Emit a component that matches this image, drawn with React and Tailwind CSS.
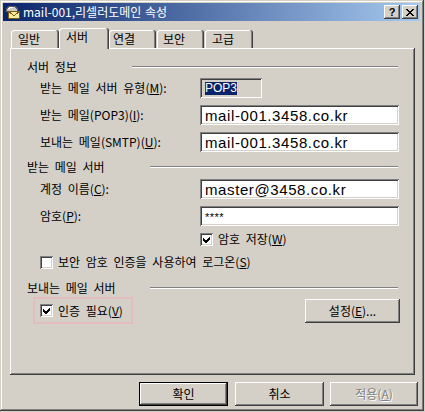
import React from 'react';

const raised = 'shadow-[inset_-1px_-1px_0_#404040,inset_1px_1px_0_#ffffff,inset_-2px_-2px_0_#808080]';
const sunken = 'shadow-[inset_1px_1px_0_#808080,inset_-1px_-1px_0_#ffffff,inset_2px_2px_0_#404040,inset_-2px_-2px_0_#d4d0c8]';

const MailIcon = () => (
  <svg width="16" height="16" viewBox="0 0 16 16" shapeRendering="crispEdges">
    <path d="M1 7 Q2 2 7 2 Q12 2 13 7 Z" fill="#c8c8c8" stroke="#5a5a5a" strokeWidth="1" />
    <path d="M3 5 Q5 3 8 3" fill="none" stroke="#ffffff" strokeWidth="1" />
    <rect x="3.5" y="7.5" width="11" height="7" fill="#f6eca0" stroke="#7a5a10" />
    <path d="M3.5 7.5 L9 11.5 L14.5 7.5" fill="none" stroke="#7a5a10" />
  </svg>
);

const CheckMark = () => (
  <svg width="7" height="7" viewBox="0 0 7 7" shapeRendering="crispEdges">
    <path d="M0 2 L2.5 4.5 L7 0 V3 L2.5 7.5 L0 5 Z" fill="#000" />
  </svg>
);

function Check({ checked }) {
  return (
    <span className={`w-[13px] h-[13px] bg-white flex items-center justify-center shrink-0 ${sunken}`}>
      {checked && <CheckMark />}
    </span>
  );
}

function Field({ children, wide = true, gray = false }) {
  return (
    <div className={`h-[20px] flex items-center pl-[5px] ${wide ? 'w-[199px]' : 'w-[62px]'} ${gray ? 'bg-[#d4d0c8] pl-[3px]' : 'bg-white'} ${sunken}`}>
      {children}
    </div>
  );
}

function Group({ title, line, className = '' }) {
  return (
    <div className={`h-[18px] flex items-center justify-between pl-[17px] pr-[17px] ${className}`}>
      <span>{title}</span>
      <div className={`h-[2px] border-t border-t-[#808080] border-b border-b-white ${line}`} />
    </div>
  );
}

function Row({ label, children, className = '' }) {
  return (
    <div className={`h-[20px] flex items-center pl-[30px] ${className}`}>
      <span className="w-[160px]">{label}</span>
      {children}
    </div>
  );
}

const Ul = ({ children }) => <u className="underline-offset-[1px]">{children}</u>;

const Value = ({ children }) => (
  <span className="font-['Liberation_Sans',sans-serif] text-[15px] tracking-[0.6px] leading-none">{children}</span>
);

function Tab({ label, active, className }) {
  return (
    <div
      className={`flex items-center rounded-t-[3px] bg-[#d4d0c8] shadow-[inset_-1px_0_0_#404040,inset_1px_1px_0_#ffffff,inset_-2px_0_0_#808080] ${
        active ? 'h-[21px] -mb-px relative z-10 pb-[3px]' : 'h-[18px]'
      } ${className}`}
    >
      {label}
    </div>
  );
}

function Btn({ children, className = '', isDefault = false }) {
  return (
    <div
      className={`h-[24px] flex items-center justify-center ${
        isDefault
          ? 'shadow-[inset_0_0_0_1px_#000000,inset_-2px_-2px_0_#404040,inset_2px_2px_0_#ffffff,inset_-3px_-3px_0_#808080]'
          : raised
      } ${className}`}
    >
      {children}
    </div>
  );
}

export default function App() {
  return (
    <div className="w-[425px] h-[412px] bg-[#d4d0c8] font-['Noto_Sans_CJK_KR','Noto_Sans',sans-serif] text-[12px] leading-[14px] text-black [word-spacing:3px]">
      <div className="w-[424px] h-[411px] pt-[3px] pl-[3px] pr-[4px] shadow-[inset_-1px_-1px_0_#404040,inset_1px_1px_0_#d4d0c8,inset_-2px_-2px_0_#808080,inset_2px_2px_0_#ffffff]">
        {/* title bar */}
        <div className="h-[18px] flex items-center pl-[2px] pr-[2px] bg-[linear-gradient(to_right,#0a246a,#a6caf0)]">
          <MailIcon />
          <span className="ml-[2px] text-white text-[12px] [word-spacing:1px]">mail-001,리셀러도메인 속성</span>
          <div className="ml-auto flex gap-[2px]">
            <div className={`w-[16px] h-[14px] bg-[#d4d0c8] flex items-center justify-center font-['Liberation_Sans',sans-serif] font-bold text-[11px] ${raised}`}>?</div>
            <div className={`w-[16px] h-[14px] bg-[#d4d0c8] flex items-center justify-center ${raised}`}>
              <svg width="8" height="7" viewBox="0 0 8 7" shapeRendering="crispEdges">
                <path d="M0 0h2l2 2.5L6 0h2L5 3.5 8 7H6L4 4.5 2 7H0l3-3.5z" fill="#000" />
              </svg>
            </div>
          </div>
        </div>

        {/* tabs */}
        <div className="mt-[7px] ml-[7px] h-[20px] flex items-end">
          <Tab label="일반" className="ml-[1px] w-[48px] pl-[7px]" />
          <Tab label="서버" active className="w-[50px] pl-[7px]" />
          <Tab label="연결" className="w-[47px] pl-[4px]" />
          <Tab label="보안" className="ml-[1px] w-[47px] pl-[6px]" />
          <Tab label="고급" className="ml-[1px] w-[48px] pl-[7px]" />
        </div>

        {/* panel */}
        <div className={`ml-[7px] w-[405px] h-[327px] pt-[10px] shadow-[inset_-1px_-1px_0_#404040,inset_1px_1px_0_#ffffff,inset_-2px_-2px_0_#808080]`}>
          <Group title="서버 정보" line="w-[266px]" />
          <Row label={<>받는 메일 서버 유형(<Ul>M</Ul>):</>} className="mt-[2px]">
            <Field wide={false} gray>
              <span className="bg-[#0a246a] text-white font-['Liberation_Sans',sans-serif] text-[12px] leading-[13px] tracking-normal">POP3</span>
            </Field>
          </Row>
          <Row label={<>받는 메일(POP3)(<Ul>I</Ul>):</>} className="mt-[7px]">
            <Field><Value>mail-001.3458.co.kr</Value></Field>
          </Row>
          <Row label={<>보내는 메일(SMTP)(<Ul>U</Ul>):</>} className="mt-[7px]">
            <Field><Value>mail-001.3458.co.kr</Value></Field>
          </Row>

          <Group title="받는 메일 서버" line="w-[248px]" className="mt-[6px]" />
          <Row label={<>계정 이름(<Ul>C</Ul>):</>} className="mt-[3px]">
            <Field><Value>master@3458.co.kr</Value></Field>
          </Row>
          <Row label={<>암호(<Ul>P</Ul>):</>} className="mt-[7px]">
            <Field>
              <span className="font-['Liberation_Sans',sans-serif] text-[11px] leading-none tracking-[0.5px] mt-[3px]">****</span>
            </Field>
          </Row>
          <div className="mt-[5px] h-[16px] flex items-center pl-[190px] gap-[5px]">
            <Check checked />
            <span>암호 저장(<Ul>W</Ul>)</span>
          </div>
          <div className="mt-[7px] h-[16px] flex items-center pl-[30px] gap-[5px]">
            <Check />
            <span>보안 암호 인증을 사용하여 로그온(<Ul>S</Ul>)</span>
          </div>

          <Group title="보내는 메일 서버" line="w-[248px]" className="mt-[9px]" />
          <div className="h-[27px] flex items-center pl-[23px] pr-[15px]">
            <div className="w-[100px] h-[27px] border-2 border-[#e4bcbc] flex items-center pl-[5px] gap-[5px]">
              <Check checked />
              <span>인증 필요(<Ul>V</Ul>)</span>
            </div>
            <Btn className="ml-auto w-[95px]">설정(<Ul>E</Ul>)...</Btn>
          </div>
        </div>

        {/* bottom buttons */}
        <div className="mt-[7px] pl-[136px] flex">
          <Btn isDefault className="w-[89px]">확인</Btn>
          <Btn className="ml-[7px] w-[89px]">취소</Btn>
          <Btn className="ml-[6px] w-[88px] text-[#808080] [text-shadow:1px_1px_0_#ffffff]">적용(<Ul>A</Ul>)</Btn>
        </div>
      </div>
    </div>
  );
}
